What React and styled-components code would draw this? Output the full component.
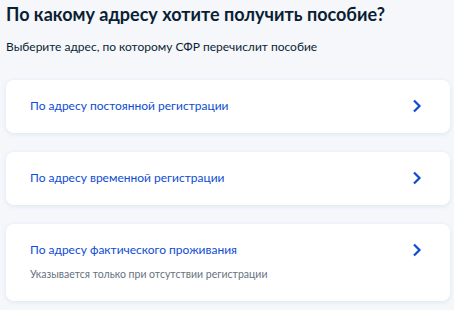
import styled, { createGlobalStyle } from 'styled-components';

const GlobalStyle = createGlobalStyle`
  html, body {
    margin: 0;
    padding: 0;
    background: #f5f7fb;
  }
  body {
    font-family: Lato, 'Noto Sans', sans-serif;
    color: #0b1f33;
  }
`;

const options = [
  { title: 'По адресу постоянной регистрации' },
  { title: 'По адресу временной регистрации' },
  {
    title: 'По адресу фактического проживания',
    hint: 'Указывается только при отсутствии регистрации',
  },
];

export default function App() {
  return (
    <>
      <GlobalStyle />
      <Page>
        <Title>По какому адресу хотите получить пособие?</Title>
        <Subtitle>Выберите адрес, по которому СФР перечислит пособие</Subtitle>
        <List>
          {options.map((opt) => (
            <Card key={opt.title} tall={!!opt.hint}>
              <CardBody>
                <CardTitle>{opt.title}</CardTitle>
                {opt.hint && <CardHint>{opt.hint}</CardHint>}
              </CardBody>
              <Chevron viewBox="0 0 10 14">
                <path d="M2 1.5 L7.5 7 L2 12.5" />
              </Chevron>
            </Card>
          ))}
        </List>
      </Page>
    </>
  );
}

const Page = styled.div`
  padding: 2px 4px 8px 6px;
`;

const Title = styled.h1`
  margin: 0;
  font-size: 18px;
  line-height: 24px;
  font-weight: 700;
  color: #0b1f33;
`;

const Subtitle = styled.p`
  margin: 12px 0 0;
  font-size: 12px;
  line-height: 18px;
  color: #0b1f33;
`;

const List = styled.div`
  display: flex;
  flex-direction: column;
  gap: 19px;
  margin-top: 24px;
`;

const Card = styled.div`
  display: flex;
  align-items: flex-start;
  justify-content: space-between;
  background: #fff;
  border-radius: 8px;
  box-shadow: 0 1px 4px rgba(176, 194, 226, 0.35);
  padding: ${(p) => (p.tall ? '17px 28px 19px 24px' : '17px 28px 18px 24px')};
`;

const CardBody = styled.div`
  display: flex;
  flex-direction: column;
  gap: 7px;
`;

const CardTitle = styled.div`
  font-size: 12px;
  line-height: 18px;
  color: #0d4cd3;
`;

const CardHint = styled.div`
  font-size: 10.5px;
  line-height: 16px;
  color: #66727f;
`;

const Chevron = styled.svg`
  width: 10px;
  height: 14px;
  margin-top: 2px;
  fill: none;
  stroke: #0d4cd3;
  stroke-width: 2.2;
`;
